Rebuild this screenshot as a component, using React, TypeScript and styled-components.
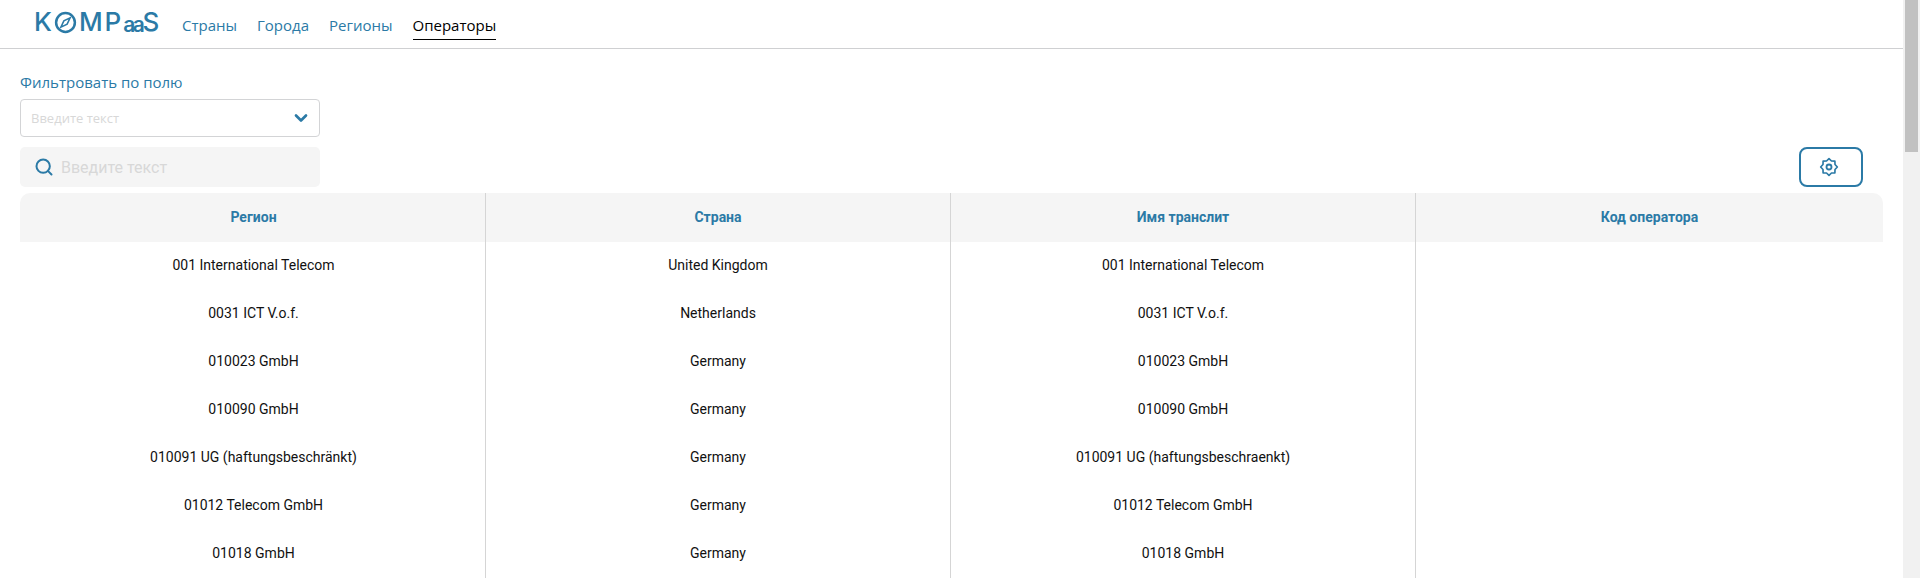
import React from "react";
import styled, { createGlobalStyle } from "styled-components";
import { ChevronDown, Search } from "lucide-react";

const BLUE = "#2b7aa6";

type Operator = {
  region: string;
  country: string;
  translit: string;
};

const same = (name: string, country: string, translit?: string): Operator => ({
  region: name,
  country,
  translit: translit || name
});

const operators: Operator[] = [
  same("001 International Telecom", "United Kingdom"),
  same("0031 ICT V.o.f.", "Netherlands"),
  same("010023 GmbH", "Germany"),
  same("010090 GmbH", "Germany"),
  same("010091 UG (haftungsbeschränkt)", "Germany", "010091 UG (haftungsbeschraenkt)"),
  same("01012 Telecom GmbH", "Germany"),
  same("01018 GmbH", "Germany")
];

// eight soft teeth round the gear
const gearPoints = Array.from({ length: 16 }, (_, i) => {
  const r = i % 2 === 0 ? 10 : 7.8;
  const a = (i * Math.PI) / 8 - Math.PI / 2;
  return `${(12 + r * Math.cos(a)).toFixed(2)},${(12 + r * Math.sin(a)).toFixed(2)}`;
}).join(" ");

const GlobalStyle = createGlobalStyle`
  html, body {
    margin: 0;
    padding: 0;
    background: #ffffff;
  }

  body {
    font-family: "Open Sans", "Liberation Sans", sans-serif;
  }
`;

function App() {
  return (
    <Shell>
      <GlobalStyle />
      <Page>
        <Header>
          <Logo>
            K
            <LogoMark viewBox="0 0 24 24" aria-hidden="true">
              <circle cx="12" cy="12" r="9.8" fill="none" stroke={BLUE} strokeWidth="2.6" />
              <path d="M16.8 7.2 13.7 13.7 7.2 16.8 10.3 10.3Z" fill="none" stroke={BLUE} strokeWidth="1.6" />
            </LogoMark>
            MP
            <LogoDouble>aa</LogoDouble>
            S
          </Logo>
          <Nav>
            <NavLink>Страны</NavLink>
            <NavLink>Города</NavLink>
            <NavLink>Регионы</NavLink>
            <NavLink $active>Операторы</NavLink>
          </Nav>
        </Header>

        <Main>
          <FilterLabel>Фильтровать по полю</FilterLabel>
          <SelectBox>
            <SelectInput placeholder="Введите текст" />
            <ChevronDown size={20} strokeWidth={3.2} color={BLUE} />
          </SelectBox>

          <Toolbar>
            <SearchBox>
              <Search size={20} strokeWidth={2.4} color={BLUE} />
              <SearchInput placeholder="Введите текст" />
            </SearchBox>
            <GearButton>
              <svg width="20" height="20" viewBox="0 0 24 24" aria-hidden="true">
                <polygon
                  points={gearPoints}
                  fill="none"
                  stroke={BLUE}
                  strokeWidth="2"
                  strokeLinejoin="round"
                />
                <circle cx="12" cy="12" r="3" fill="none" stroke={BLUE} strokeWidth="2.2" />
              </svg>
            </GearButton>
          </Toolbar>

          <Table>
            <thead>
              <tr>
                <HeadCell $width={466}>Регион</HeadCell>
                <HeadCell $width={465}>Страна</HeadCell>
                <HeadCell $width={465}>Имя транслит</HeadCell>
                <HeadCell>Код оператора</HeadCell>
              </tr>
            </thead>
            <tbody>
              {operators.map((op) => (
                <tr key={op.region}>
                  <Cell>{op.region}</Cell>
                  <Cell>{op.country}</Cell>
                  <Cell>{op.translit}</Cell>
                  <Cell />
                </tr>
              ))}
            </tbody>
          </Table>
        </Main>
      </Page>
      <ScrollTrack>
        <ScrollThumb />
      </ScrollTrack>
    </Shell>
  );
}

const Shell = styled.div`
  display: flex;
  height: 100vh;
  overflow: hidden;
`;

const Page = styled.div`
  flex: 1;
  min-width: 0;
`;

const ScrollTrack = styled.div`
  flex: none;
  width: 17px;
  background: #f1f1f1;
`;

const ScrollThumb = styled.div`
  width: 13px;
  height: 152px;
  margin: 0 2px;
  background: #c1c1c1;
`;

const Header = styled.header`
  display: flex;
  align-items: flex-start;
  height: 48px;
  padding-left: 34px;
  border-bottom: 1px solid #cfd0d2;
`;

const Logo = styled.div`
  display: flex;
  align-items: center;
  width: 148px;
  height: 48px;
  padding-bottom: 4px;
  box-sizing: border-box;
  font-family: "Inter", sans-serif;
  font-size: 26px;
  font-weight: 500;
  line-height: 1;
  letter-spacing: 2px;
  color: ${BLUE};
`;

const LogoMark = styled.svg`
  flex: none;
  width: 23px;
  height: 23px;
  margin: 0 2px 0 0;
`;

const LogoDouble = styled.span`
  margin: 4px 0 0;
  font-size: 21px;
  font-weight: 600;
  letter-spacing: -2.5px;
`;

const Nav = styled.nav`
  display: flex;
  gap: 20px;
`;

const NavLink = styled.a<{ $active?: boolean }>`
  display: block;
  height: 40px;
  padding-top: 15px;
  box-sizing: border-box;
  font-size: 15px;
  line-height: 21px;
  color: ${(p) => (p.$active ? "#000000" : BLUE)};
  border-bottom: 1px solid ${(p) => (p.$active ? "#000000" : "transparent")};
`;

const Main = styled.main`
  padding: 23px 20px 0;
`;

const FilterLabel = styled.div`
  height: 27px;
  font-size: 15px;
  line-height: 20px;
  color: ${BLUE};
`;

const SelectBox = styled.div`
  display: flex;
  align-items: center;
  justify-content: space-between;
  box-sizing: border-box;
  width: 300px;
  height: 38px;
  padding: 0 8px 0 10px;
  border: 1px solid #d3d4d6;
  border-radius: 4px;
`;

const SelectInput = styled.input`
  flex: 1;
  min-width: 0;
  padding: 0;
  border: none;
  outline: none;
  background: transparent;
  font-family: "Open Sans", sans-serif;
  font-size: 13px;

  &::placeholder {
    color: #d8d8d8;
  }
`;

const Toolbar = styled.div`
  display: flex;
  justify-content: space-between;
  margin-top: 10px;
`;

const SearchBox = styled.div`
  display: flex;
  align-items: center;
  gap: 7px;
  box-sizing: border-box;
  width: 300px;
  height: 40px;
  padding-left: 14px;
  background: #f5f5f5;
  border-radius: 5px;
`;

const SearchInput = styled.input`
  flex: 1;
  min-width: 0;
  padding: 0;
  border: none;
  outline: none;
  background: transparent;
  font-family: "Roboto", sans-serif;
  font-size: 16px;

  &::placeholder {
    color: #d8d8d8;
  }
`;

const GearButton = styled.button`
  display: flex;
  align-items: center;
  justify-content: center;
  box-sizing: border-box;
  width: 64px;
  height: 40px;
  margin-right: 20px;
  padding: 0 4px 0 0;
  background: #ffffff;
  border: 2px solid ${BLUE};
  border-radius: 8px;
`;

const Table = styled.table`
  width: 100%;
  margin-top: 6px;
  table-layout: fixed;
  border-collapse: separate;
  border-spacing: 0;
  font-family: "Roboto", sans-serif;
`;

const HeadCell = styled.th<{ $width?: number }>`
  width: ${(p) => (p.$width ? `${p.$width}px` : "auto")};
  height: 49px;
  padding: 0 0 2px;
  box-sizing: border-box;
  background: #f5f5f5;
  font-size: 14px;
  font-weight: 700;
  color: ${BLUE};
  text-align: center;
  border-right: 1px solid #d5d5d5;

  &:first-child {
    padding-left: 2px;
    border-top-left-radius: 10px;
  }

  &:last-child {
    border-right: none;
    border-top-right-radius: 10px;
  }
`;

const Cell = styled.td`
  height: 48px;
  padding: 0 0 2px;
  box-sizing: border-box;
  font-size: 14px;
  color: #111111;
  text-align: center;
  border-right: 1px solid #d5d5d5;

  &:first-child {
    padding-left: 2px;
  }

  &:last-child {
    border-right: none;
  }
`;

export default App;
